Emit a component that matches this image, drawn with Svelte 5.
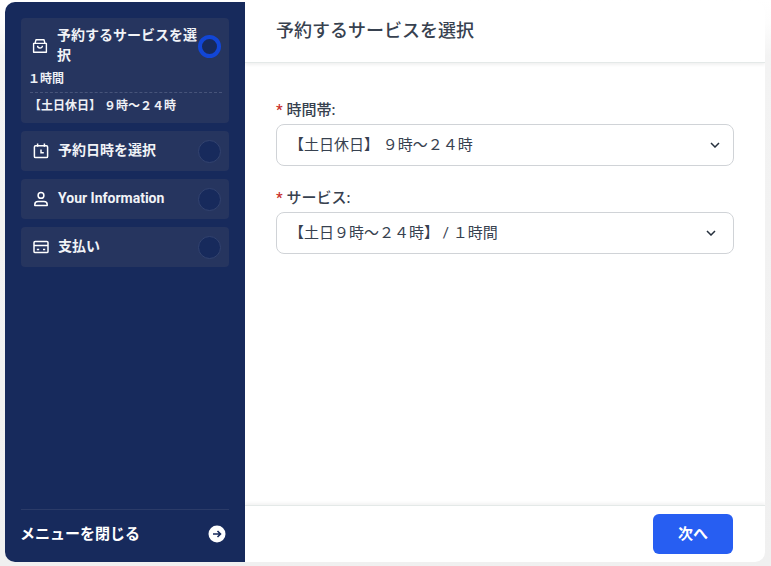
<script>
  const steps = [
    { label: '予約日時を選択', icon: 'clock' },
    { label: 'Your Information', icon: 'user' },
    { label: '支払い', icon: 'card' }
  ];

  const fields = [
    { label: '時間帯:', value: '【土日休日】 ９時〜２４時', wide: true },
    { label: 'サービス:', value: '【土日９時〜２４時】 / １時間', wide: false }
  ];
</script>

<div class="page">
  <div class="booking">
    <aside class="sidebar">
      <nav class="steps">
        <div class="step active">
          <div class="step-head">
            <svg class="icon bag" viewBox="0 0 16 16" fill="none" stroke="currentColor" stroke-width="1.4">
              <path d="M1.600 5.400h12.800v8.800H1.600z M3 5.400 4 1.800h8l1 3.600 M5.600 7.800c0 3 4.800 3 4.800 0" stroke-linejoin="round" />
            </svg>
            <span class="step-title">予約するサービスを選択</span>
            <span class="dot current"></span>
          </div>
          <div class="step-sub">１時間</div>
          <div class="step-detail">【土日休日】 ９時〜２４時</div>
        </div>

        {#each steps as step}
          <div class="step">
            <div class="step-head">
              <svg class="icon" viewBox="0 0 16 16" fill="none" stroke="currentColor" stroke-width="1.5">
                {#if step.icon === 'clock'}
                  <rect x="1.400" y="2.800" width="13.200" height="11.800" rx="1.200" />
                  <path d="M4.600 .6v3.200M11.400 .6v3.200M8 6.400v3.400h2.800" />
                {:else if step.icon === 'user'}
                  <circle cx="8" cy="4.400" r="2.900" />
                  <path d="M1.800 14.400v-.9c0-1.900 1.500-3 3.200-3h6c1.700 0 3.200 1.100 3.200 3v.9z" stroke-linejoin="round" />
                {:else}
                  <rect x="1" y="2.400" width="14" height="11.200" rx="1.200" />
                  <path d="M1 6.600h14M3.800 10.400h2.400M10 10.400h2.200" />
                {/if}
              </svg>
              <span class="step-title">{step.label}</span>
              <span class="dot"></span>
            </div>
          </div>
        {/each}
      </nav>

      <div class="sidebar-footer">
        <span>メニューを閉じる</span>
        <svg class="close-icon" viewBox="0 0 18 18">
          <circle cx="9" cy="9" r="8.500" fill="#fff" />
          <path d="M5 9h7.500M9.500 6l3 3-3 3" fill="none" stroke="#172a5c" stroke-width="1.600" />
        </svg>
      </div>
    </aside>

    <main class="content">
      <header class="content-head">予約するサービスを選択</header>

      <div class="form">
        {#each fields as field}
          <div class="field">
            <div class="field-label"><span class="req">*</span> {field.label}</div>
            <div class="select" class:wide={field.wide}>
              <span class="select-value">{field.value}</span>
              <svg class="chevron" viewBox="0 0 10 6" fill="none" stroke="#26303d" stroke-width="1.500">
                <path d="M1 1l4 4 4-4" />
              </svg>
            </div>
          </div>
        {/each}
      </div>

      <footer class="content-foot">
        <button class="next">次へ</button>
      </footer>
    </main>
  </div>
</div>

<style>
  :global(body) {
    margin: 0;
    background: #fff;
  }

  .page {
    width: 771px;
    height: 566px;
    padding: 2px 6px 4px 5px;
    box-sizing: border-box;
    font-family: Roboto, "Noto Sans CJK JP", sans-serif;
    background: linear-gradient(#fff, #fdfdfd 4%, #f3f3f3 10%, #f0f0f0);
  }

  .booking {
    display: flex;
    height: 100%;
    background: #fff;
    border-radius: 10px;
    overflow: hidden;
  }

  .sidebar {
    width: 240px;
    flex-shrink: 0;
    box-sizing: border-box;
    padding: 16px 16px 0;
    background: #172a5c;
    color: #fff;
    display: flex;
    flex-direction: column;
  }

  .steps {
    display: flex;
    flex-direction: column;
    gap: 8px;
    flex: 1;
  }

  .step {
    background: #26355f;
    border-radius: 4px;
    padding: 0 8px 0 12px;
  }

  .step-head {
    display: flex;
    align-items: center;
    height: 40px;
  }

  .step.active {
    padding: 7px 7px 8px 9px;
  }

  .active .step-head {
    height: 42px;
  }

  .active .step-title {
    line-height: 20px;
  }

  .icon {
    width: 16px;
    height: 16px;
    flex-shrink: 0;
  }

  .icon.bag {
    margin-left: 2px;
  }

  .step-title {
    flex: 1;
    min-width: 0;
    margin-left: 9px;
    padding-bottom: 2px;
    font-size: 14px;
    font-weight: 700;
    line-height: 18px;
    color: #f1f3f7;
  }

  .dot {
    width: 23px;
    height: 23px;
    box-sizing: border-box;
    border-radius: 50%;
    background: #172a5c;
    border: 1px solid #33436f;
    flex-shrink: 0;
    margin-left: -5px;
  }

  .dot.current {
    border: 4px solid #1246d6;
    margin-left: -4px;
    margin-right: 1px;
  }

  .step-sub {
    margin-top: 4px;
    margin-left: -2px;
    font-size: 12px;
    font-weight: 700;
    line-height: 16px;
    color: #eef0f5;
  }

  .step-detail {
    margin-top: 5px;
    padding-top: 4px;
    border-top: 1px dashed #47547a;
    font-size: 12px;
    font-weight: 700;
    line-height: 18px;
    text-indent: -1px;
    color: #eef0f5;
  }

  .sidebar-footer {
    height: 53px;
    box-sizing: border-box;
    border-top: 1px solid #2b3b68;
    display: flex;
    align-items: center;
    justify-content: space-between;
    padding: 0 3px 7px 0;
    font-size: 15px;
    font-weight: 700;
  }

  .sidebar-footer span {
    margin-left: -1px;
  }

  .close-icon {
    width: 18px;
    height: 18px;
    margin-top: 3px;
  }

  .content {
    flex: 1;
    min-width: 0;
    display: flex;
    flex-direction: column;
  }

  .content-head {
    height: 61px;
    padding: 0 0 7px 31px;
    box-sizing: border-box;
    display: flex;
    align-items: center;
    font-size: 18px;
    font-weight: 500;
    color: #37414f;
    border-bottom: 1px solid #e4e9e8;
    box-shadow: 0 2px 3px rgba(0, 0, 0, 0.06);
  }

  .form {
    flex: 1;
    padding: 37px 31px 0;
    display: flex;
    flex-direction: column;
    gap: 22px;
  }

  .field-label {
    font-size: 15px;
    font-weight: 500;
    line-height: 20px;
    color: #37414f;
    margin-bottom: 4px;
  }

  .req {
    color: #c9302c;
  }

  .select {
    height: 42px;
    box-sizing: border-box;
    border: 1px solid #d0d3d7;
    border-radius: 8px;
    padding: 0 17px 0 12px;
    display: flex;
    align-items: center;
    justify-content: space-between;
    font-size: 15px;
    color: #37414f;
  }

  .select.wide {
    padding-right: 13px;
  }

  .select-value {
    margin-bottom: 3px;
  }

  .chevron {
    width: 10px;
    height: 6px;
  }

  .content-foot {
    height: 57px;
    box-sizing: border-box;
    border-top: 1px solid #e4e9e8;
    box-shadow: 0 -2px 3px rgba(0, 0, 0, 0.05);
    display: flex;
    align-items: flex-start;
    justify-content: flex-end;
    padding: 8px 32px 0 0;
  }

  .next {
    width: 80px;
    height: 40px;
    padding: 0 0 3px;
    border: none;
    border-radius: 6px;
    background: #275ef2;
    color: #fff;
    font-family: inherit;
    font-size: 15px;
    font-weight: 700;
  }
</style>
